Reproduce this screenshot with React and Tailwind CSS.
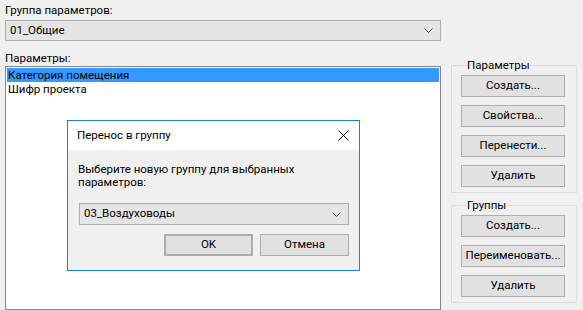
import React from 'react'

const font = { fontFamily: 'Roboto, "Noto Sans", sans-serif' }

function Chevron() {
  return (
    <svg width="9" height="5" viewBox="0 0 9 5" className="shrink-0">
      <path d="M0.5 0.5 L4.5 4.5 L8.5 0.5" fill="none" stroke="#444" strokeWidth="1" />
    </svg>
  )
}

function Combo({ value, className }) {
  return (
    <div className={`h-[22px] flex items-center justify-between pl-[4px] pr-[7px] bg-[#e5e5e5] border border-[#adadad] text-[11.5px] text-black ${className}`}>
      <span>{value}</span>
      <Chevron />
    </div>
  )
}

function Btn({ children, className = '' }) {
  return (
    <div className={`h-[22px] flex items-center justify-center bg-[#e1e1e1] border border-[#adadad] text-[11.5px] text-black ${className}`}>
      {children}
    </div>
  )
}

function Group({ title, items, className = '' }) {
  return (
    <fieldset className={`border border-[#dcdcdc] pl-[9px] pr-[11px] pt-[3px] pb-[5px] flex flex-col gap-[8px] ${className}`}>
      <legend className="ml-[5px] px-[1px] text-[11.5px] leading-[14px] text-black">{title}</legend>
      {items.map(t => (
        <Btn key={t} className="w-[104px]">{t}</Btn>
      ))}
    </fieldset>
  )
}

export default function App() {
  return (
    <div className="relative w-[583px] h-[310px] overflow-hidden bg-[#f0f0f0] flex" style={font}>
      <div className="w-[436px] ml-[5px] flex flex-col">
        <div className="mt-[2px] h-[16px] text-[11.5px] leading-[16px] text-black">Группа параметров:</div>
        <Combo value="01_Общие" className="mt-[2px]" />
        <div className="mt-[9px] h-[16px] text-[11.5px] leading-[16px] text-black">Параметры:</div>
        <div className="h-[260px] bg-white border border-[#828790] p-[1px] text-[11.5px] leading-[14px] text-black">
          <div className="bg-[#3399ff] pl-[1px]">Категория помещения</div>
          <div className="pl-[1px]">Шифр проекта</div>
        </div>
      </div>
      <div className="ml-[10px] flex flex-col">
        <Group title="Параметры" items={['Создать...', 'Свойства...', 'Перенести...', 'Удалить']} className="mt-[58px] w-[126px]" />
        <Group title="Группы" items={['Создать...', 'Переименовать...', 'Удалить']} className="mt-[5px] w-[126px]" />
      </div>

      <div className="absolute left-[67px] top-[120px] w-[293px] h-[151px] border border-[#1883d7] bg-[#f0f0f0] flex flex-col">
        <div className="h-[29px] bg-white flex items-center justify-between pl-[9px] pr-[10px] text-[11.5px] text-black">
          <span>Перенос в группу</span>
          <svg width="11" height="11" viewBox="0 0 11 11">
            <path d="M0.5 0.5 L10.5 10.5 M10.5 0.5 L0.5 10.5" stroke="#000" strokeWidth="1" />
          </svg>
        </div>
        <div className="flex flex-col pl-[10px] pr-[10px]">
          <div className="mt-[13px] text-[11.5px] leading-[13px] text-black">
            Выберите новую группу для выбранных<br />параметров:
          </div>
          <Combo value="03_Воздуховоды" className="mt-[14px] ml-[1px]" />
          <div className="mt-[9px] flex justify-end gap-[7px]">
            <Btn className="w-[89px] border-2 border-[#0078d7]">OK</Btn>
            <Btn className="w-[89px]">Отмена</Btn>
          </div>
        </div>
      </div>
    </div>
  )
}
